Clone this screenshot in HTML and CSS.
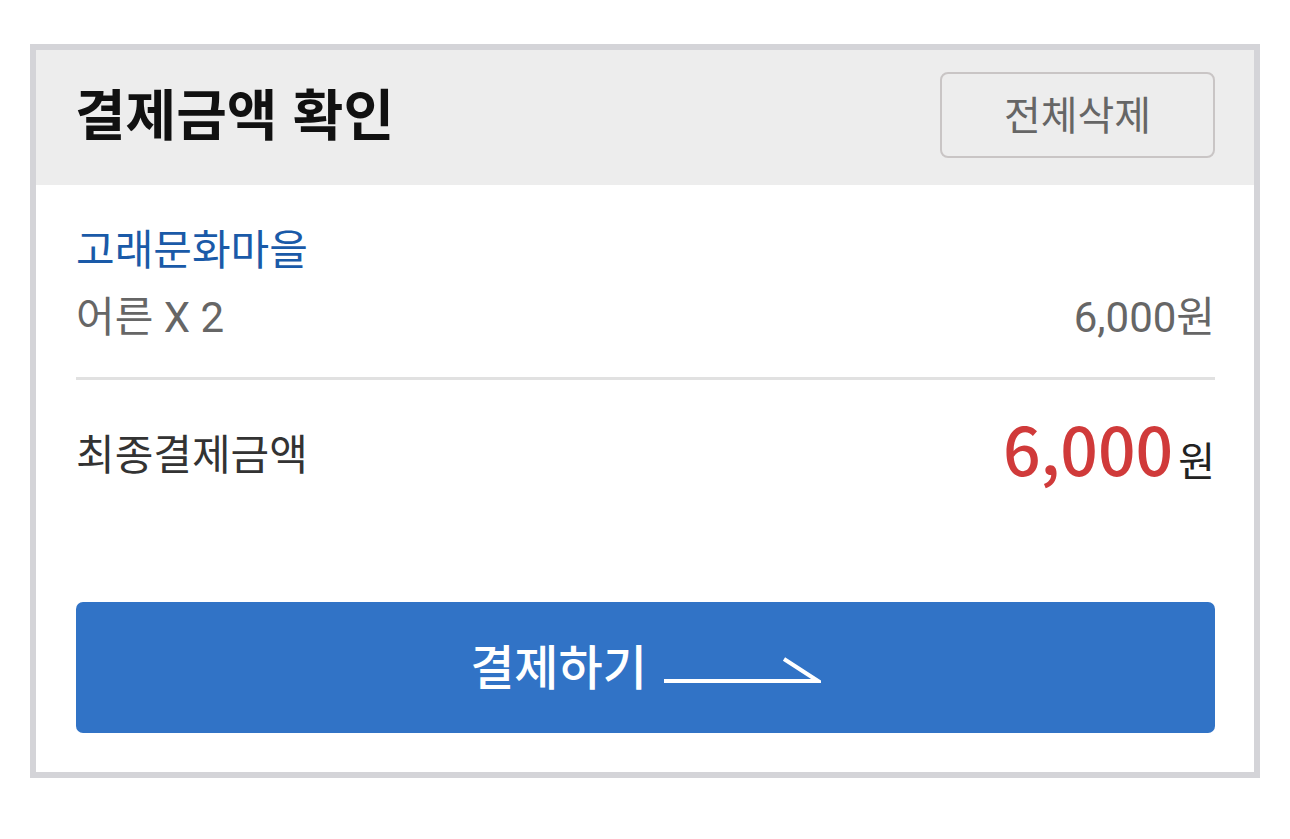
FILE: index.html
```html
<!DOCTYPE html>
<html lang="ko">
<head>
<meta charset="UTF-8" />
<meta name="viewport" content="width=device-width, initial-scale=1" />
<title>결제금액 확인</title>
<link rel="stylesheet" href="styles.css">
</head>
<body>

<section class="pay-box">
  <div class="pay-head">
    <h1>결제금액 확인</h1>
    <button type="button" class="btn-clear">전체삭제</button>
  </div>

  <div class="pay-body">
    <div class="item">
      <div class="item-name">고래문화마을</div>
      <div class="item-row">
        <span>어른 X 2</span>
        <span>6,000원</span>
      </div>
    </div>

    <div class="total">
      <span class="total-label">최종결제금액</span>
      <span class="total-price"><strong>6,000</strong>원</span>
    </div>

    <button type="button" class="btn-pay">
      결제하기
      <svg class="arrow" width="158" height="28" viewBox="0 0 158 28">
        <path d="M1 24 H155 L121 2" fill="none" stroke="#fff" stroke-width="4" />
      </svg>
    </button>
  </div>
</section>

</body>
</html>
```

FILE: styles.css
```css
body {
  margin: 0;
  padding: 44px 30px;
  background: #fff;
  font-family: Roboto, "Noto Sans CJK KR", sans-serif;
  color: #333;
}
.pay-box {
  border: 6px solid #d4d4d8;
  background: #fff;
}
.pay-head {
  display: flex;
  align-items: center;
  justify-content: space-between;
  height: 135px;
  padding: 0 39px 0 40px;
  background: #ededed;
}
.pay-head h1 {
  margin: 0 0 12px -1px;
  font-family: "Noto Sans CJK KR", sans-serif;
  font-size: 55px;
  line-height: 1;
  font-weight: 700;
  color: #111;
}
.btn-clear {
  width: 275px;
  height: 86px;
  margin-top: -6px;
  padding-bottom: 4px;
  background: transparent;
  border: 2px solid #c9c5c5;
  border-radius: 8px;
  font-family: "Noto Sans CJK KR", sans-serif;
  font-size: 40px;
  color: #666;
  cursor: pointer;
}
.pay-body {
  padding: 34px 39px 39px 40px;
}
.item {
  border-bottom: 3px solid #e1e1e1;
  padding-bottom: 31px;
}
.item-name {
  font-family: "Noto Sans CJK KR", sans-serif;
  font-size: 42px;
  line-height: 56px;
  color: #1a5aa8;
}
.item-row {
  display: flex;
  justify-content: space-between;
  margin-top: 15px;
  font-size: 42px;
  line-height: 56px;
  color: #666;
}
.total {
  display: flex;
  justify-content: space-between;
  align-items: center;
  height: 100px;
  margin-top: 22px;
  font-family: "Noto Sans CJK KR", sans-serif;
  font-size: 42px;
  line-height: 1;
  color: #333;
}
.total-price {
  margin-bottom: 10px;
  font-size: 40px;
  color: #222;
}
.total-price strong {
  font-size: 66px;
  font-weight: 500;
  color: #d03a3a;
  margin-right: 5px;
}
.btn-pay {
  display: flex;
  align-items: center;
  justify-content: center;
  gap: 16px;
  width: 100%;
  height: 131px;
  margin-top: 100px;
  padding-bottom: 8px;
  background: #3173c6;
  border: none;
  border-radius: 7px;
  font-family: "Noto Sans CJK KR", sans-serif;
  font-size: 48px;
  font-weight: 500;
  color: #fff;
  cursor: pointer;
}
.arrow {
  margin-top: 14px;
}
```
